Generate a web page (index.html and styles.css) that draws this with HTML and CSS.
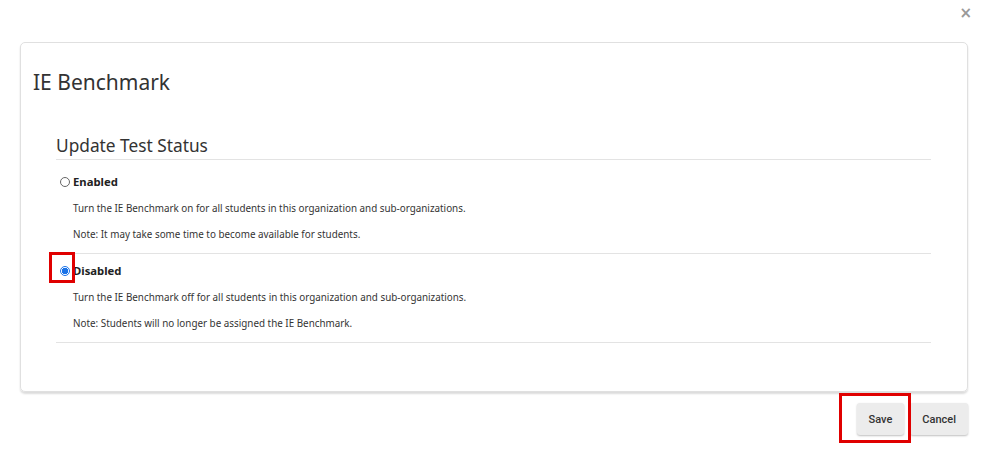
FILE: index.html
```html
<!DOCTYPE html>
<html>
<head>
<meta charset="utf-8">
<link rel="stylesheet" href="styles.css">
</head>
<body>
<div class="modal">
  <div class="topbar"><button class="close" type="button">×</button></div>
  <div class="card">
    <h1 class="title">IE Benchmark</h1>
    <div class="section">
      <h2 class="section-title">Update Test Status</h2>
      <div class="option">
        <label class="opt-label"><span class="radio"></span><span class="opt-name">Enabled</span></label>
        <p class="desc">Turn the IE Benchmark on for all students in this organization and sub-organizations.</p>
        <p class="desc">Note: It may take some time to become available for students.</p>
      </div>
      <div class="option">
        <label class="opt-label"><span class="radio checked"></span><span class="opt-name">Disabled</span><span class="highlight hl-radio"></span></label>
        <p class="desc">Turn the IE Benchmark off for all students in this organization and sub-organizations.</p>
        <p class="desc">Note: Students will no longer be assigned the IE Benchmark.</p>
      </div>
    </div>
  </div>
  <div class="footer">
    <div class="btn-wrap"><button class="btn" type="button">Save</button><span class="highlight hl-save"></span></div>
    <button class="btn" type="button">Cancel</button>
  </div>
</div>
</body>
</html>
```
FILE: styles.css
```css
html, body {
  margin: 0;
  padding: 0;
  background: #fff;
}
body {
  font-family: "Noto Sans", "Open Sans", sans-serif;
  color: #333;
  min-height: 457px;
}
.modal {
  width: 991px;
}
.topbar {
  height: 42px;
  display: flex;
  justify-content: flex-end;
  align-items: flex-start;
}
.close {
  border: 0;
  background: none;
  color: #999;
  font-family: "DejaVu Sans", sans-serif;
  font-size: 15px;
  font-weight: bold;
  line-height: 1;
  padding: 6px 19px 0 0;
  cursor: pointer;
}
.card {
  margin: 0 23px 0 20px;
  height: 350px;
  box-sizing: border-box;
  border: 1px solid #e0e0e0;
  border-radius: 5px;
  box-shadow: 0 2px 2px rgba(0,0,0,0.14);
  padding: 23px 36px 0 12px;
}
.title {
  margin: 0;
  font-size: 21px;
  font-weight: 400;
  line-height: 32px;
  color: #333;
}
.section {
  margin: 35px 0 0 23px;
}
.section-title {
  margin: 0;
  font-size: 17.3px;
  font-weight: 400;
  line-height: 26px;
  padding-bottom: 0;
  border-bottom: 1px solid #e3e3e3;
  color: #333;
}
.option {
  border-bottom: 1px solid #e3e3e3;
  padding: 7px 0 6px 4px;
}
.option:first-of-type {
  padding-top: 12px;
}
.opt-label {
  position: relative;
  display: flex;
  align-items: center;
  height: 19px;
  margin-bottom: 5px;
}
.radio {
  width: 8px;
  height: 8px;
  border: 1px solid #666;
  border-radius: 50%;
  margin-right: 3px;
  box-sizing: content-box;
}
.radio.checked {
  border-color: #1a73e8;
  background: radial-gradient(circle, #1a73e8 0 3px, #fff 3.5px);
}
.opt-name {
  font-size: 11.3px;
  font-weight: 700;
  color: #222;
}
.desc {
  margin: 0;
  padding-left: 13px;
  font-size: 9.85px;
  line-height: 25.5px;
  color: #333;
}
.highlight {
  position: absolute;
  border: 3px solid #e00000;
  box-sizing: border-box;
  pointer-events: none;
}
.hl-radio {
  left: -11px;
  top: -9px;
  width: 26px;
  height: 31px;
}
.footer {
  display: flex;
  justify-content: flex-end;
  gap: 6px;
  margin: 11px 23px 0 0;
}
.btn-wrap {
  position: relative;
}
.btn {
  border: 0;
  background: #ececec;
  border-radius: 3px;
  box-shadow: 0 1px 2px rgba(0,0,0,0.25);
  font-family: Roboto, "Noto Sans", sans-serif;
  font-size: 11px;
  font-weight: 500;
  color: #333;
  height: 32px;
  padding: 0 12px;
  cursor: pointer;
}
.hl-save {
  left: -18px;
  top: -10px;
  width: 72px;
  height: 50px;
}
```
